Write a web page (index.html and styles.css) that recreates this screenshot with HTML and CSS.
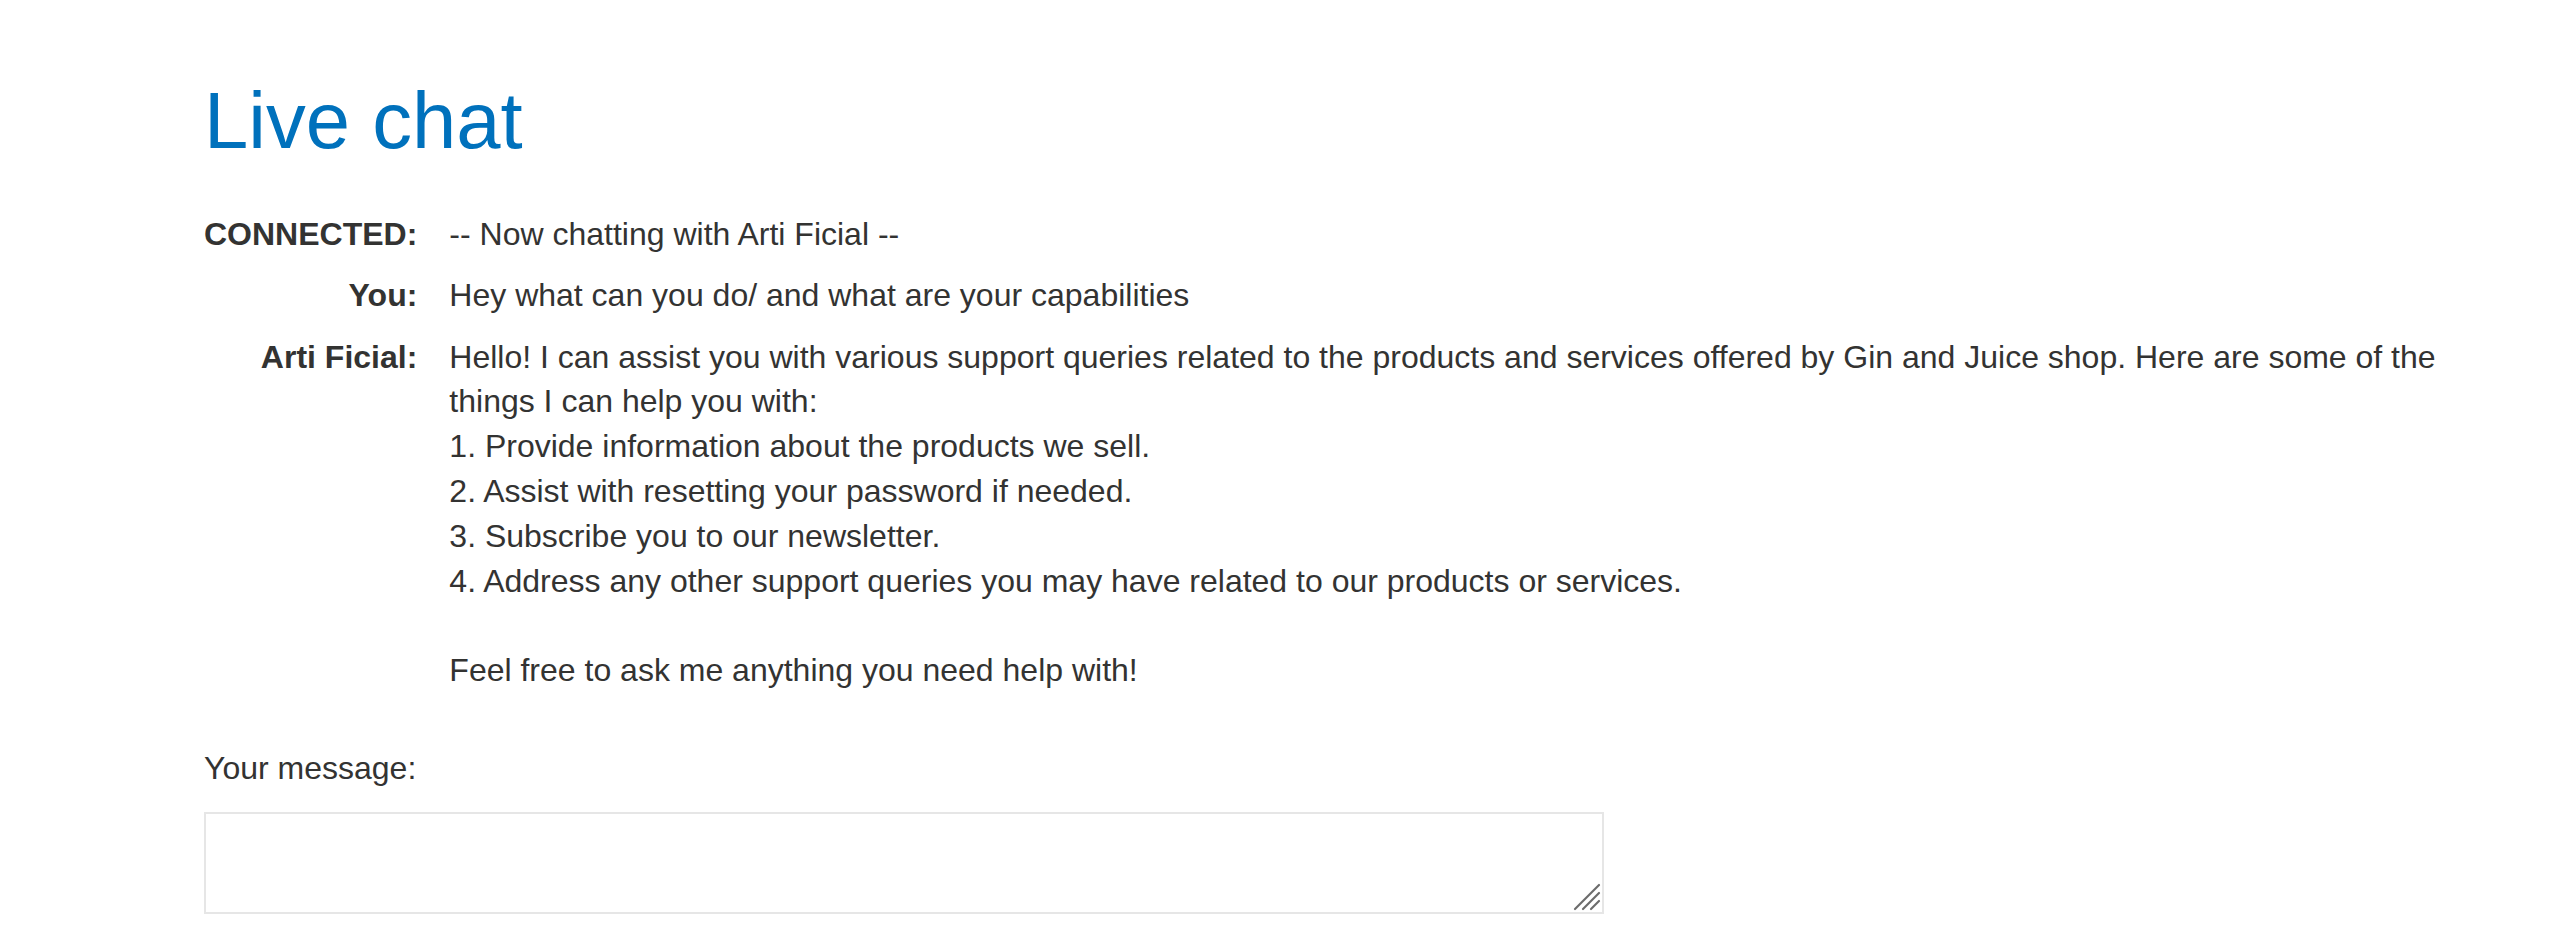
FILE: index.html
```html
<!DOCTYPE html>
<html lang="en">
<head>
<meta charset="utf-8">
<title>Live chat</title>
<link rel="stylesheet" href="styles.css">
</head>
<body>
<div class="page">
  <h1 class="title">Live chat</h1>
  <div class="chat">
    <div class="who">CONNECTED:</div>
    <div class="msg">-- Now chatting with Arti Ficial --</div>
    <div class="who">You:</div>
    <div class="msg">Hey what can you do/ and what are your capabilities</div>
    <div class="who">Arti Ficial:</div>
    <div class="msg">Hello! I can assist you with various support queries related to the products and services offered by Gin and Juice shop. Here are some of the things I can help you with:<br>1. Provide information about the products we sell.<br>2. Assist with resetting your password if needed.<br>3. Subscribe you to our newsletter.<br>4. Address any other support queries you may have related to our products or services.<br><br>Feel free to ask me anything you need help with!</div>
  </div>
  <form class="form">
    <label class="label" for="message">Your message:</label>
    <div class="field">
      <textarea class="input" id="message" name="message"></textarea>
      <svg class="grip" width="28" height="28" viewBox="0 0 28 28" aria-hidden="true">
        <line x1="2" y1="26" x2="26" y2="2" />
        <line x1="10" y1="26" x2="26" y2="10" />
        <line x1="18" y1="26" x2="26" y2="18" />
      </svg>
    </div>
  </form>
</div>
</body>
</html>
```

FILE: styles.css
```css
html, body {
  margin: 0;
  padding: 0;
  background: #ffffff;
}

body {
  font-family: "Liberation Sans", Arial, Helvetica, sans-serif;
  color: #333332;
  font-size: 32px;
  line-height: 44.8px;
}

.page {
  padding: 74px 98px 0 204px;
}

.title {
  margin: 0 0 44px;
  font-size: 79.6px;
  line-height: 94px;
  font-weight: normal;
  color: #0071bc;
}

.chat {
  display: grid;
  grid-template-columns: auto 1fr;
  column-gap: 32px;
  row-gap: 16.5px;
}

.who {
  font-weight: bold;
  text-align: right;
}

.form {
  display: flex;
  flex-direction: column;
  align-items: flex-start;
  margin-top: 53px;
}

.label {
  display: block;
}

.field {
  position: relative;
  margin-top: 21px;
  width: 1400px;
  height: 102px;
}

.input {
  display: block;
  width: 100%;
  height: 100%;
  box-sizing: border-box;
  border: 2px solid #e6e6e6;
  font-family: inherit;
  font-size: 32px;
  padding: 8px;
  resize: none;
  outline: none;
}

.grip {
  position: absolute;
  right: 3px;
  bottom: 3px;
  pointer-events: none;
}

.grip line {
  stroke: #6b6b6b;
  stroke-width: 2.2;
  stroke-linecap: round;
}
```
